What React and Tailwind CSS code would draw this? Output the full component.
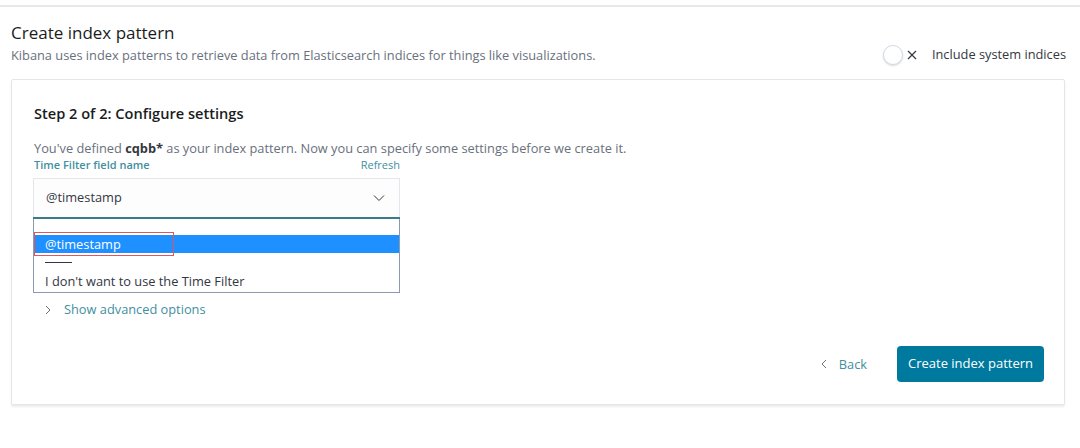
export default function App() {
  const font = { fontFamily: '"Open Sans", "Noto Sans", sans-serif' };
  return (
    <div className="w-[1080px] h-[448px] bg-white relative overflow-hidden" style={font}>
      <div className="h-[5px]" />
      <div className="h-[2px] bg-[#e8e8e8]" />
      <div className="px-[11px] pt-[15px]">
        <div className="text-[17px] leading-[22px] text-[#1a1c21]">Create index pattern</div>
        <div className="flex items-center justify-between mt-[1px]">
          <div className="text-[12.8px] leading-[18px] text-[#69707d]">
            Kibana uses index patterns to retrieve data from Elasticsearch indices for things like visualizations.
          </div>
          <div className="flex items-center mr-[3px]">
            <div className="w-[20px] h-[20px] rounded-full border border-[#d3dae6] bg-white shadow-[0_1px_2px_rgba(0,0,0,0.15)]" />
            <svg width="12" height="12" viewBox="0 0 12 12" className="ml-[3px]">
              <path d="M2 2 L10 10 M10 2 L2 10" stroke="#343741" strokeWidth="1.2" />
            </svg>
            <span className="ml-[14px] text-[12.8px] text-[#343741]">Include system indices</span>
          </div>
        </div>
        <div className="mt-[14px] w-[1054px] h-[326px] border border-[#e3e6eb] rounded-[2px] shadow-[0_2px_2px_rgba(0,0,0,0.08)] px-[22px] pt-[23px]">
          <div className="text-[14.6px] leading-[20px] font-semibold text-[#1a1c21]">Step 2 of 2: Configure settings</div>
          <div className="mt-[16px] text-[12.8px] leading-[18px] text-[#69707d]">
            You've defined <span className="font-bold text-[#343741]">cqbb*</span> as your index pattern. Now you can specify some settings before we create it.
          </div>
          <div className="w-[367px] mt-[1px] -ml-px">
            <div className="flex justify-between text-[11px] leading-[14px] font-semibold text-[#3f8fa0] pl-px">
              <span>Time Filter field name</span>
              <span className="font-normal">Refresh</span>
            </div>
            <div className="mt-[6px] h-[39px] border border-[#e3e6eb] border-b-0 bg-[#fdfdfe] flex items-center justify-between px-[12px]">
              <span className="text-[12.8px] text-[#343741]">@timestamp</span>
              <svg width="12" height="8" viewBox="0 0 12 8" className="mr-[2px]">
                <path d="M1 1.5 L6 6.5 L11 1.5" stroke="#343741" strokeWidth="1" fill="none" />
              </svg>
            </div>
            <div className="h-[2px] bg-[#3b7a8c]" />
            <div className="relative border border-[#8a9bb0] border-t-0 h-[74px] bg-white">
              <div className="h-[16px]" />
              <div className="h-[18px] bg-[#1e90ff] text-white text-[12.8px] leading-[18px] pl-[11px]">@timestamp</div>
              <div className="ml-[11px] mt-[9px] w-[27px] h-px bg-[#343741]" />
              <div className="mt-[10px] text-[12.8px] leading-[16px] text-[#343741] pl-[11px]">I don't want to use the Time Filter</div>
              <div className="absolute left-0 top-[13px] w-[140px] h-[24px] border border-[#e0565a]" />
            </div>
          </div>
          <div className="flex items-center mt-[7px] ml-[10px] text-[12.8px] text-[#3f8fa0]">
            <svg width="8" height="12" viewBox="0 0 8 12">
              <path d="M2 2 L6 6 L2 10" stroke="#69707d" strokeWidth="1" fill="none" />
            </svg>
            <span className="ml-[12px]">Show advanced options</span>
          </div>
          <div className="flex justify-end items-center mt-[27px] mr-[-2px]">
            <div className="flex items-center text-[12.8px] text-[#3f8fa0] mr-[30px]">
              <svg width="8" height="12" viewBox="0 0 8 12">
                <path d="M6 2 L2 6 L6 10" stroke="#69707d" strokeWidth="1" fill="none" />
              </svg>
              <span className="ml-[11px]">Back</span>
            </div>
            <div className="h-[36px] w-[147px] rounded-[4px] bg-[#00799f] text-white text-[13px] font-medium flex items-center justify-center">
              Create index pattern
            </div>
          </div>
        </div>
      </div>
    </div>
  );
}
